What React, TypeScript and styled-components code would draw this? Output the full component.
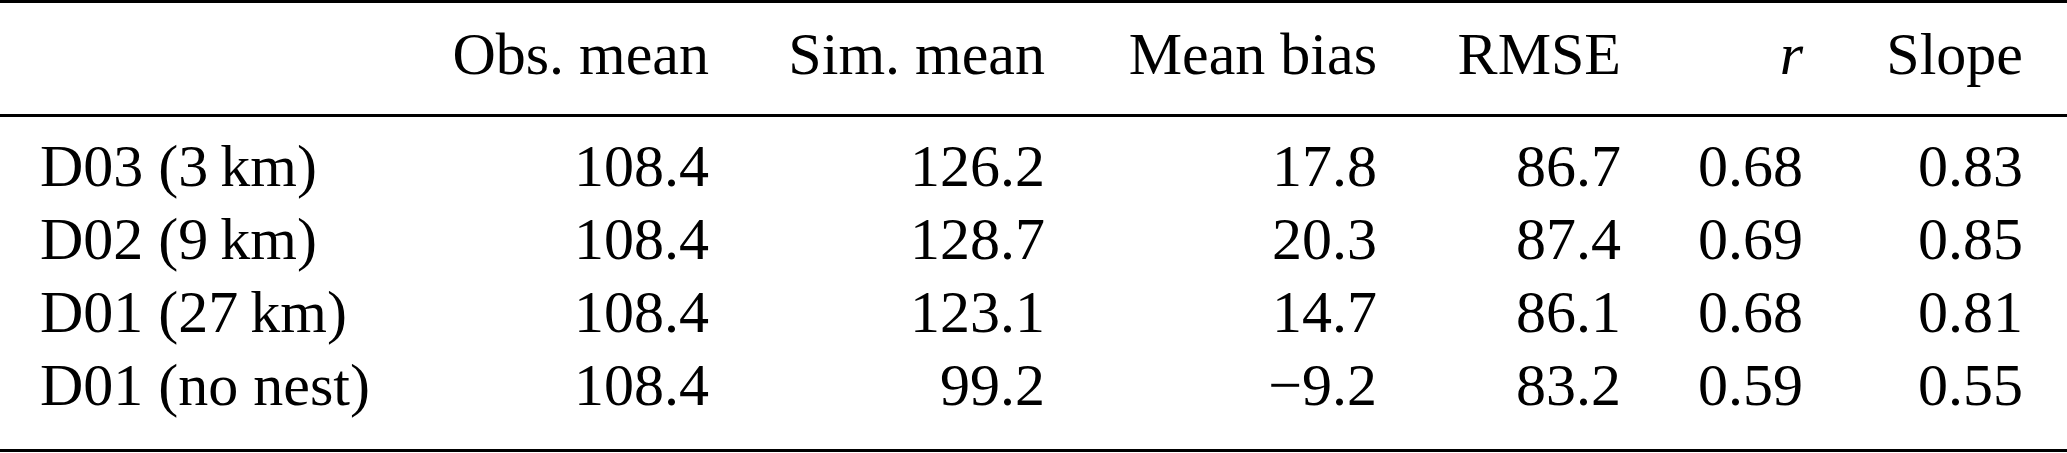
import React from 'react';
import styled, { createGlobalStyle } from 'styled-components';

const GlobalStyle = createGlobalStyle`
    html, body {
        margin: 0;
        padding: 0;
        background: #ffffff;
    }
    body {
        font-family: 'Liberation Serif', 'Times New Roman', serif;
        color: #000000;
    }
`;

const COLUMNS = '400px 269px 336px 332px 244px 182px 220px';
const LINE_HEIGHT = 73;

const Wrapper = styled.div`
    width: 2067px;
    height: 453px;
    background: #ffffff;
    font-family: 'Liberation Serif', 'Times New Roman', serif;
    font-size: 60px;
    color: #000000;
`;

const Rule = styled.div`
    height: 3px;
    background: #000000;
`;

const RowGroup = styled.div<{ padTop: number; padBottom: number }>`
    padding-top: ${props => props.padTop}px;
    padding-bottom: ${props => props.padBottom}px;
`;

const Row = styled.div`
    display: grid;
    grid-template-columns: ${COLUMNS};
    padding-left: 40px;
    height: ${LINE_HEIGHT}px;
    line-height: ${LINE_HEIGHT}px;
    white-space: nowrap;
`;

const Cell = styled.div<{ align?: 'left' | 'right' }>`
    text-align: ${props => props.align || 'right'};
`;

const Italic = styled.span`
    font-style: italic;
`;

interface RowData {
    name: string;
    values: string[];
}

const headers: React.ReactNode[] = [
    'Obs. mean',
    'Sim. mean',
    'Mean bias',
    'RMSE',
    <Italic key="r">r</Italic>,
    'Slope',
];

const rows: RowData[] = [
    { name: 'D03 (3\u2009km)', values: ['108.4', '126.2', '17.8', '86.7', '0.68', '0.83'] },
    { name: 'D02 (9\u2009km)', values: ['108.4', '128.7', '20.3', '87.4', '0.69', '0.85'] },
    { name: 'D01 (27\u2009km)', values: ['108.4', '123.1', '14.7', '86.1', '0.68', '0.81'] },
    { name: 'D01 (no nest)', values: ['108.4', '99.2', '\u22129.2', '83.2', '0.59', '0.55'] },
];

const App = () => {
    return (
        <Wrapper>
            <GlobalStyle />
            <Rule />
            <RowGroup padTop={15} padBottom={23}>
                <Row>
                    <Cell align="left" />
                    {headers.map((h, i) => (
                        <Cell key={i}>{h}</Cell>
                    ))}
                </Row>
            </RowGroup>
            <Rule />
            <RowGroup padTop={13} padBottom={27}>
                {rows.map(row => (
                    <Row key={row.name}>
                        <Cell align="left">{row.name}</Cell>
                        {row.values.map((v, i) => (
                            <Cell key={i}>{v}</Cell>
                        ))}
                    </Row>
                ))}
            </RowGroup>
            <Rule />
        </Wrapper>
    );
};

export default App;
